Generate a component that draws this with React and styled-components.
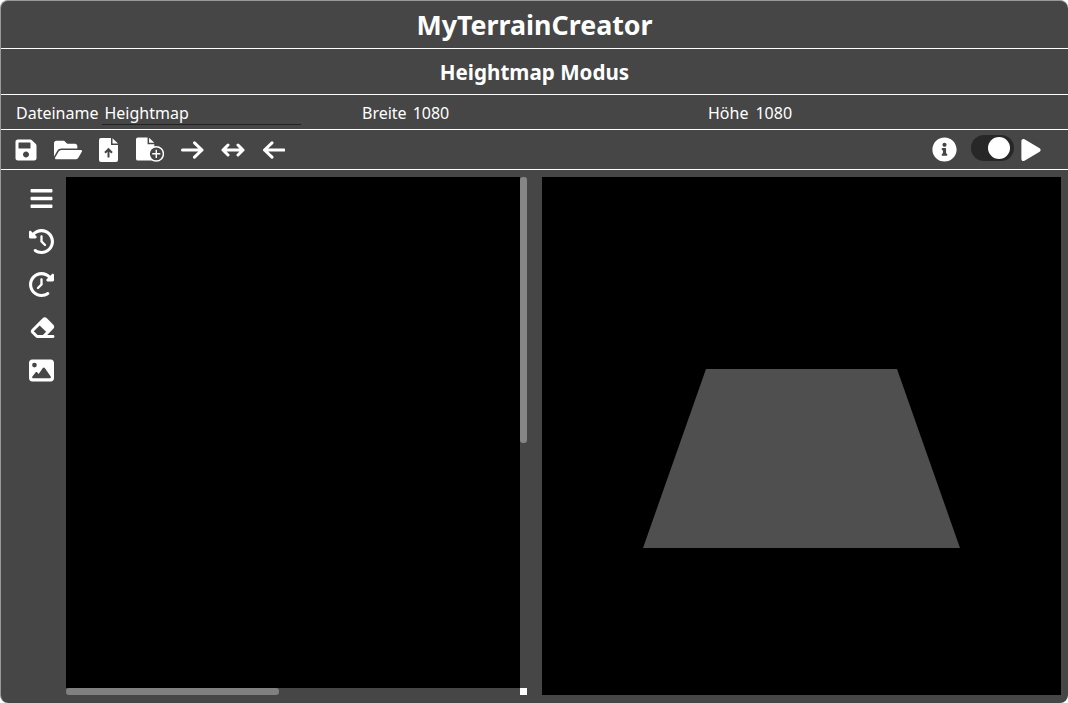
import React from "react";
import styled, { createGlobalStyle } from "styled-components";
import { FaSave, FaFolderOpen, FaBars, FaInfoCircle, FaPlay } from "react-icons/fa";
import { FaClockRotateLeft, FaEraser, FaImage } from "react-icons/fa6";

const BG = "#464646";

const FILE_BODY = "M2 0H12V7H19V22a2 2 0 0 1-2 2H2a2 2 0 0 1-2-2V2a2 2 0 0 1 2-2z";
const FILE_FOLD = "M13.5 0.3L19 5.6H13.5z";

function FileUploadIcon() {
  return (
    <svg width="19" height="24" viewBox="0 0 19 24">
      <path d={FILE_BODY} fill="#fff" />
      <path d={FILE_FOLD} fill="#fff" />
      <path d="M9.5 19.5V11.5M6 14.8L9.5 11.2L13 14.8" fill="none" stroke={BG} strokeWidth="2" />
    </svg>
  );
}

function FileNewIcon() {
  return (
    <svg width="29" height="25" viewBox="0 0 29 25">
      <path d={FILE_BODY} fill="#fff" />
      <path d={FILE_FOLD} fill="#fff" />
      <circle cx="21" cy="17" r="7.4" fill={BG} stroke="#fff" strokeWidth="1.5" />
      <path d="M21 12.8V21.2M16.8 17H25.2" stroke="#fff" strokeWidth="1.5" />
    </svg>
  );
}

function ArrowRightIcon() {
  return (
    <svg width="23" height="18" viewBox="0 0 23 18" fill="none" stroke="#fff" strokeWidth="3" strokeLinecap="round" strokeLinejoin="round">
      <path d="M1.5 9H21M13.5 1.8L21 9L13.5 16.2" />
    </svg>
  );
}

function ArrowBothIcon() {
  return (
    <svg width="24" height="14" viewBox="0 0 24 14" fill="none" stroke="#fff" strokeWidth="3" strokeLinecap="round" strokeLinejoin="round">
      <path d="M2 7H22M7 2L2 7L7 12M17 2L22 7L17 12" />
    </svg>
  );
}

function ArrowLeftIcon() {
  return (
    <svg width="23" height="18" viewBox="0 0 23 18" fill="none" stroke="#fff" strokeWidth="3" strokeLinecap="round" strokeLinejoin="round">
      <path d="M22 9H2.5M10 1.8L2.5 9L10 16.2" />
    </svg>
  );
}

function App() {
  return (
    <>
      <GlobalStyle />
      <Frame>
        <Title>MyTerrainCreator</Title>
        <SubTitle>Heightmap Modus</SubTitle>
        <InfoRow>
          <Field>
            <Label>Dateiname</Label>
            <NameInput defaultValue="Heightmap" />
          </Field>
          <Field>
            <Label>Breite</Label>
            <Value $gap={2}>1080</Value>
          </Field>
          <Field>
            <Label>Höhe</Label>
            <Value $gap={3}>1080</Value>
          </Field>
        </InfoRow>
        <Toolbar>
          <ToolGroup>
            <ToolButton $w={22}><FaSave size={24} /></ToolButton>
            <ToolButton $w={28}><FaFolderOpen size={28} /></ToolButton>
            <ToolButton $w={20}><FileUploadIcon /></ToolButton>
            <ToolButton $w={28}><FileNewIcon /></ToolButton>
            <ToolButton $w={23}><ArrowRightIcon /></ToolButton>
            <ToolButton $w={24}><ArrowBothIcon /></ToolButton>
            <ToolButton $w={24}><ArrowLeftIcon /></ToolButton>
          </ToolGroup>
          <ToolEnd>
            <FaInfoCircle size={25} />
            <Toggle><Knob /></Toggle>
            <FaPlay size={22} />
          </ToolEnd>
        </Toolbar>
        <Main>
          <SideBar>
            <FaBars size={25} />
            <FaClockRotateLeft size={25} />
            <Mirrored><FaClockRotateLeft size={25} /></Mirrored>
            <EraserSlot><FaEraser size={27} /></EraserSlot>
            <FaImage size={25} />
          </SideBar>
          <ScrollView>
            <Canvas />
            <VTrack><VThumb /></VTrack>
            <HTrack><HThumb /></HTrack>
            <Corner />
          </ScrollView>
          <Preview>
            <svg width="519" height="518" viewBox="0 0 519 518">
              <polygon points="164,192 355,192 418,371 101,371" fill="#4f4f4f" />
            </svg>
          </Preview>
        </Main>
      </Frame>
    </>
  );
}

export default App;

const GlobalStyle = createGlobalStyle`
  html, body {
    margin: 0;
    padding: 0;
    background: #fff;
  }
  * {
    box-sizing: border-box;
  }
`;

const Frame = styled.div`
  width: 1068px;
  height: 703px;
  overflow: hidden;
  display: flex;
  flex-direction: column;
  background: ${BG};
  color: #fff;
  border-top: 1px solid #999;
  border-left: 1px solid #999;
  border-radius: 8px;
  font-family: "Noto Sans", "Open Sans", sans-serif;
`;

const Title = styled.h1`
  height: 48px;
  margin: 0;
  display: flex;
  align-items: center;
  justify-content: center;
  border-bottom: 1px solid #fff;
  font-size: 26.8px;
  font-weight: 700;
`;

const SubTitle = styled.h2`
  height: 46px;
  margin: 0;
  display: flex;
  align-items: center;
  justify-content: center;
  border-bottom: 1px solid #fff;
  font-size: 20.6px;
  font-weight: 700;
`;

const InfoRow = styled.div`
  height: 35px;
  padding-left: 15px;
  display: grid;
  grid-template-columns: 346px 346px 1fr;
  align-items: center;
  border-bottom: 1px solid #fff;
  font-size: 16px;
`;

const Field = styled.div`
  display: flex;
  align-items: center;
  gap: 4px;
`;

const Label = styled.label`
  padding-top: 2px;
`;

const Value = styled.span`
  padding-top: 2px;
  margin-left: ${(p) => p.$gap}px;
`;

const NameInput = styled.input`
  width: 199px;
  height: 24px;
  padding: 2px 0 0 2px;
  margin-top: 1px;
  background: transparent;
  border: none;
  border-bottom: 1px solid #222;
  outline: none;
  color: #fff;
  font: inherit;
`;

const Toolbar = styled.div`
  height: 40px;
  padding: 0 26px 0 14px;
  display: flex;
  align-items: center;
  justify-content: space-between;
  border-bottom: 1px solid #fff;
`;

const ToolGroup = styled.div`
  display: flex;
  align-items: center;
  gap: 17px;
`;

const ToolButton = styled.div`
  width: ${(p) => p.$w}px;
  height: 28px;
  display: flex;
  align-items: center;
  justify-content: flex-start;
`;

const ToolEnd = styled.div`
  display: flex;
  align-items: center;

  svg:first-child {
    margin-right: 14px;
  }
  svg:last-child {
    margin-left: 6px;
  }
`;

const Toggle = styled.div`
  width: 43px;
  height: 26px;
  margin-top: -4px;
  padding: 2px 4px;
  display: flex;
  justify-content: flex-end;
  align-items: center;
  background: #272727;
  border-radius: 13px;
`;

const Knob = styled.div`
  width: 22px;
  height: 22px;
  border-radius: 50%;
  background: #fff;
`;

const Main = styled.div`
  flex: 1;
  min-height: 0;
  padding: 7px 6px 8px 0;
  display: flex;
`;

const SideBar = styled.div`
  width: 65px;
  padding: 9px 0 0 15px;
  display: flex;
  flex-direction: column;
  align-items: center;
  gap: 18px;
`;

const Mirrored = styled.span`
  display: flex;
  transform: scaleX(-1);
`;

const EraserSlot = styled.span`
  display: flex;
  height: 25px;
  margin-left: 3px;
  align-items: center;
`;

const ScrollView = styled.div`
  width: 461px;
  height: 518px;
  display: grid;
  grid-template-columns: 454px 7px;
  grid-template-rows: 511px 7px;
`;

const Canvas = styled.div`
  background: #000;
`;

const VTrack = styled.div`
  display: flex;
  align-items: flex-start;
`;

const HTrack = styled.div`
  display: flex;
  align-items: flex-start;
`;

const VThumb = styled.div`
  width: 7px;
  height: 266px;
  background: #868686;
  border-radius: 3px;
`;

const HThumb = styled.div`
  width: 213px;
  height: 7px;
  background: #808080;
  border-radius: 3px;
`;

const Corner = styled.div`
  background: #fff;
`;

const Preview = styled.div`
  width: 519px;
  height: 518px;
  margin-left: 15px;
  background: #000;
  display: flex;
`;
